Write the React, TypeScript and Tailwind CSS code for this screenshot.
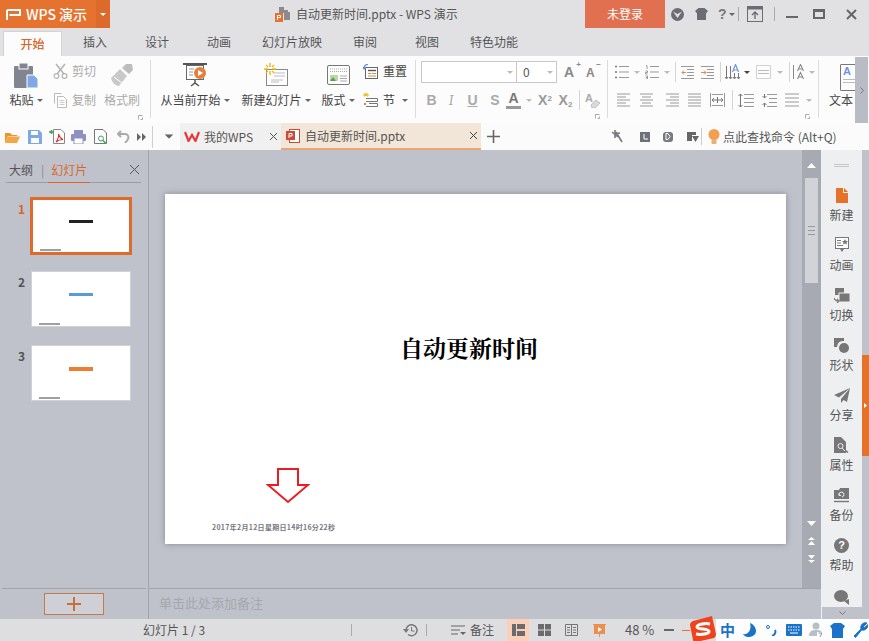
import React from 'react';

const FONT = { fontFamily: '"Noto Sans CJK SC", "Liberation Sans", sans-serif' };

type IconProps = { w: number; h: number; className?: string; children: React.ReactNode };

const Ico: React.FC<IconProps> = ({ w, h, className, children }) => (
  <svg width={w} height={h} viewBox={`0 0 ${w} ${h}`} fill="none" className={`shrink-0 ${className ?? ''}`}>
    {children}
  </svg>
);

const Caret: React.FC<{ className?: string; color?: string }> = ({ className, color = '#666' }) => (
  <Ico w={6} h={3} className={className}>
    <polygon points="0,0 6,0 3,3" fill={color} />
  </Ico>
);

// horizontal text lines used by the paragraph buttons
const Lines: React.FC<{ w: number; rows: [number, number][]; className?: string; color?: string }> = ({
  w,
  rows,
  className,
  color = '#9a9a9a',
}) => (
  <Ico w={w} h={14} className={className}>
    {rows.map(([x, len], i) => (
      <rect key={i} x={x} y={1 + i * (12 / (rows.length - 1 || 1)) - 0.5} width={len} height={1} fill={color} />
    ))}
  </Ico>
);

const Launcher: React.FC<{ className?: string }> = ({ className }) => (
  <Ico w={5} h={5} className={className}>
    <path d="M0.5 4.5V0.5H4.5M4.5 2.5V4.5H2.5" stroke="#aaa" />
  </Ico>
);

const RibbonSep = () => <div className="w-px h-[58px] mt-[4px] bg-[#dcdcdc] shrink-0" />;
const RowSep: React.FC<{ className?: string }> = ({ className }) => (
  <div className={`w-px h-[20px] bg-[#d4d4d4] shrink-0 ${className ?? ''}`} />
);

const LargeBtn: React.FC<{ className: string; label: string; children: React.ReactNode; muted?: boolean; caret?: boolean }> = ({
  className,
  label,
  children,
  muted,
  caret = true,
}) => (
  <div className={`flex flex-col items-center shrink-0 pt-[7px] ${className}`}>
    <div className="h-[28px] flex items-start">{children}</div>
    <div className={`h-[18px] flex items-center gap-[3px] text-[12px] whitespace-nowrap ${muted ? 'text-[#aaa]' : 'text-[#444]'}`}>
      {label}
      {caret && <Caret />}
    </div>
  </div>
);

const PasteIcon = () => (
  <Ico w={26} h={26}>
    <rect x="1" y="3" width="19" height="22" rx="1" fill="#80858f" />
    <rect x="6" y="0" width="9" height="6" fill="#80858f" stroke="#fff" strokeWidth="1" />
    <polygon points="14,12 21,12 25,16 25,25 14,25" fill="#7fa8e6" stroke="#fff" strokeWidth="1" />
  </Ico>
);

const ScissorIcon = () => (
  <Ico w={15} h={16}>
    <path d="M3 1L11 11M12 1L4 11" stroke="#b5b5b5" strokeWidth="1.6" />
    <circle cx="3.5" cy="13" r="2.4" stroke="#b5b5b5" strokeWidth="1.2" />
    <circle cx="11.5" cy="13" r="2.4" stroke="#b5b5b5" strokeWidth="1.2" />
  </Ico>
);

const CopyIcon = () => (
  <Ico w={15} h={16}>
    <path d="M1.5 11.5V1.5H8.5" stroke="#bbb" />
    <path d="M4.5 4.5H10.5L13.5 7.5V15.5H4.5Z" stroke="#bbb" fill="#fff" />
    <path d="M6.5 8.5H11.5M6.5 10.5H11.5M6.5 12.5H11.5" stroke="#ccc" />
  </Ico>
);

const BrushIcon = () => (
  <Ico w={24} h={24}>
    <path d="M1 15L10 6L17 13L9 23C6 23 2 20 1 15Z" fill="#c9c9c9" />
    <path d="M12 5L16 1L22 1L23 7L19 11Z" fill="#bdbdbd" />
    <path d="M4 14L12 20" stroke="#fff" />
  </Ico>
);

const PresentIcon = () => (
  <Ico w={24} h={24}>
    <path d="M0 1H24" stroke="#555" strokeWidth="2" />
    <rect x="3.5" y="2.5" width="17" height="14" stroke="#666" fill="#fff" />
    <path d="M6 6H11M6 9H10M6 12H10" stroke="#999" />
    <circle cx="17" cy="10" r="6" fill="#e57f3d" />
    <polygon points="15,7 20,10 15,13" fill="#fff" />
    <path d="M12 17V20M8 23L12 20L16 23" stroke="#555" strokeWidth="1.5" />
  </Ico>
);

const NewSlideIcon = () => (
  <Ico w={24} h={23}>
    <rect x="2.5" y="6.5" width="21" height="16" stroke="#888" fill="#fff" />
    <path d="M10 10H21M10 13H21M7 17H19M7 19H15" stroke="#bbb" />
    <path d="M6 0V4M6 8V12M0 6H4M8 6H12M2 2L4 4M8 8L10 10M10 2L8 4M4 8L2 10" stroke="#efb70f" strokeWidth="1.4" />
  </Ico>
);

const LayoutIcon = () => (
  <Ico w={23} h={20}>
    <rect x="0.5" y="0.5" width="22" height="19" rx="1.5" stroke="#777" fill="#fff" />
    <path d="M3 4H20M3 6.5H20" stroke="#aaa" strokeDasharray="1 1" />
    <rect x="3" y="10" width="8" height="6" fill="#b9d8a8" />
    <polygon points="3,16 6,12 9,16" fill="#5da04f" />
    <path d="M13 11H20M13 13.5H20M13 16H20" stroke="#aaa" />
  </Ico>
);

const ResetIcon = () => (
  <Ico w={15} h={15}>
    <rect x="2.5" y="3.5" width="12" height="11" stroke="#666" fill="#fff" />
    <path d="M5 6.5H13" stroke="#555" strokeWidth="1.4" />
    <path d="M5 9.5H8M9 9.5H13M5 12H13" stroke="#d98a50" />
    <path d="M5 0.5C2.5 0.5 1 2 1 4.5M0 3L1 5L3 3.5" stroke="#5d8fd8" strokeWidth="1.2" />
  </Ico>
);

const SectionIcon = () => (
  <Ico w={15} h={15}>
    <path d="M3 0V3M0 2H6M1 0.5L5 3.5M5 0.5L1 3.5" stroke="#efb70f" />
    <path d="M3 5.5H14.5V8.5H3M6 10.5H14.5V13.5H3" stroke="#777" />
    <rect x="1" y="10" width="2" height="2" fill="#e57f3d" />
  </Ico>
);

const Ribbon = () => (
  <div className="flex h-[67px] bg-[#fcfcfc] shrink-0">
    {/* clipboard */}
    <div className="w-[150px] shrink-0 flex flex-col">
      <div className="flex h-[55px]">
        <LargeBtn className="w-[52px]" label="粘贴">
          <PasteIcon />
        </LargeBtn>
        <div className="w-[50px] shrink-0 pl-px">
          <div className="flex items-center gap-[4px] h-[22px] mt-[4px] text-[12px] text-[#aaa]">
            <ScissorIcon />
            剪切
          </div>
          <div className="flex items-center gap-[4px] h-[22px] mt-[7px] text-[12px] text-[#aaa]">
            <CopyIcon />
            复制
          </div>
        </div>
        <LargeBtn className="w-[38px] ml-px" label="格式刷" muted caret={false}>
          <BrushIcon />
        </LargeBtn>
      </div>
      <div className="flex justify-end pr-[7px] mt-[4px]">
        <Launcher />
      </div>
    </div>
    <RibbonSep />
    {/* slides */}
    <div className="w-[264px] shrink-0 flex">
      <LargeBtn className="w-[72px] ml-[8px]" label="从当前开始">
        <PresentIcon />
      </LargeBtn>
      <LargeBtn className="w-[72px] ml-[9px]" label="新建幻灯片">
        <NewSlideIcon />
      </LargeBtn>
      <LargeBtn className="w-[36px] ml-[8px]" label="版式">
        <div className="mt-[2px]">
          <LayoutIcon />
        </div>
      </LargeBtn>
      <div className="ml-[7px] w-[50px] shrink-0">
        <div className="flex items-center gap-[5px] h-[22px] mt-[4px] text-[12px] text-[#444]">
          <ResetIcon />
          重置
        </div>
        <div className="flex items-center gap-[5px] h-[22px] mt-[7px] text-[12px] text-[#444]">
          <SectionIcon />
          节
          <Caret className="ml-[2px]" />
        </div>
      </div>
    </div>
    <RibbonSep />
    {/* font */}
    <div className="w-[191px] shrink-0 flex flex-col">
      <div className="flex items-center h-[22px] mt-[5px]">
        <div className="w-[96px] h-[22px] ml-[5px] border border-[#c8c8c8] bg-white flex items-center justify-end pr-[3px] shrink-0">
          <Caret color="#bbb" />
        </div>
        <div className="w-[41px] h-[22px] -ml-px border border-[#c8c8c8] bg-white flex items-center justify-between pl-[6px] pr-[3px] text-[12px] text-[#555] shrink-0">
          0
          <Caret color="#bbb" />
        </div>
        <div className="ml-[7px] w-[15px] h-[18px] relative text-[14px] leading-[18px] text-[#888] font-bold" style={{ fontFamily: '"Liberation Sans"' }}>
          A<span className="absolute right-[-2px] top-[-3px] text-[8px] leading-[10px]">+</span>
        </div>
        <div className="ml-[7px] w-[15px] h-[18px] relative text-[12px] leading-[20px] text-[#888] font-bold" style={{ fontFamily: '"Liberation Sans"' }}>
          A<span className="absolute right-[0px] top-[-3px] text-[8px] leading-[10px]">−</span>
        </div>
      </div>
      <div className="flex items-center h-[22px] mt-[6px] text-[#aaa] font-bold" style={{ fontFamily: '"Liberation Sans"' }}>
        <span className="w-[11px] ml-[10px] text-[14px] text-center">B</span>
        <span className="w-[8px] ml-[10px] text-[14px] text-center italic font-normal font-serif">I</span>
        <span className="w-[11px] ml-[12px] text-[14px] text-center underline">U</span>
        <span className="w-[10px] ml-[12px] text-[14px] text-center">S</span>
        <span className="w-[15px] ml-[6px] text-[14px] leading-[15px] text-center text-[#777] border-b-[3px] border-[#999]">A</span>
        <Caret className="ml-[5px]" color="#bbb" />
        <span className="w-[16px] ml-[5px] text-[14px] text-center text-[#999]">
          X<sup className="text-[8px]">2</sup>
        </span>
        <span className="w-[15px] ml-[5px] text-[14px] text-center text-[#999]">
          X<sub className="text-[8px]">2</sub>
        </span>
        <RowSep className="ml-[6px]" />
        <Ico w={15} h={16} className="ml-[5px]">
          <text x="0" y="10" fontSize="11" fill="#aaa" fontFamily="Liberation Sans">
            A
          </text>
          <path d="M6 13L11 8L15 11L10 16H7Z" fill="#d9d9d9" stroke="#aaa" strokeWidth="0.6" />
        </Ico>
      </div>
      <div className="flex justify-end pr-[7px] mt-[3px]">
        <Launcher />
      </div>
    </div>
    <RibbonSep />
    {/* paragraph */}
    <div className="w-[210px] shrink-0 flex flex-col">
      <div className="flex items-center h-[22px] mt-[5px]">
        <Ico w={14} h={14} className="ml-[7px]">
          <path d="M4 1.500H14M4 7H14M4 12.500H14" stroke="#999" />
          <circle cx="1" cy="1.500" r="1" fill="#777" />
          <circle cx="1" cy="7" r="1" fill="#777" />
          <circle cx="1" cy="12.500" r="1" fill="#777" />
        </Ico>
        <Caret className="ml-[5px]" color="#bbb" />
        <Ico w={14} h={14} className="ml-[5px]">
          <path d="M5 1.500H14M5 7H14M5 12.500H14" stroke="#999" />
          <path d="M1 1L2 0.500V4M0.500 6H2.500V7.500H0.500V9H2.500M0.500 11H2.500V14H0.500M1 12.500H2.500" stroke="#777" strokeWidth="0.7" />
        </Ico>
        <Caret className="ml-[5px]" color="#bbb" />
        <RowSep className="ml-[5px]" />
        <Ico w={13} h={14} className="ml-[5px]">
          <path d="M0 1.500H13M6 4.500H13M6 7.500H13M6 10.500H13M0 13.500H13" stroke="#999" />
          <path d="M5 7.500H1M3 5.500L1 7.500L3 9.500" stroke="#d98a50" />
        </Ico>
        <Ico w={13} h={14} className="ml-[7px]">
          <path d="M0 1.500H13M6 4.500H13M6 7.500H13M6 10.500H13M0 13.500H13" stroke="#999" />
          <path d="M0 7.500H5M3 5.500L5 7.500L3 9.500" stroke="#d98a50" />
        </Ico>
        <RowSep className="ml-[6px]" />
        <Ico w={16} h={16} className="ml-[4px]">
          <path d="M1.500 2V14M5.500 2V14M9.500 9V14M13.500 9V14" stroke="#777" />
          <path d="M0 13L1.500 15L3 13M4 13L5.500 15L7 13M8 13L9.500 15L11 13M12 13L13.500 15L15 13" stroke="#777" />
          <path d="M7.500 8L10.500 0.500L13.500 8M8.500 6H12.500" stroke="#6c95dd" strokeWidth="1.200" />
        </Ico>
        <Caret className="ml-[3px]" color="#444" />
        <Ico w={15} h={14} className="ml-[6px]">
          <rect x="0.500" y="0.500" width="14" height="13" stroke="#aaa" strokeDasharray="1 1" />
          <path d="M2 5.500H13M2 8.500H13" stroke="#bbb" />
        </Ico>
        <Caret className="ml-[6px]" color="#bbb" />
        <RowSep className="ml-[6px]" />
        <Ico w={14} h={16} className="ml-[3px]">
          <path d="M0.500 1V15" stroke="#888" />
          <path d="M4.500 7L7.500 0.500L10.500 7M5.500 5H9.500M4.500 15L7.500 8.500L10.500 15M5.500 13H9.500" stroke="#888" strokeWidth="1.100" />
        </Ico>
        <Caret className="ml-[2px]" color="#bbb" />
      </div>
      <div className="flex items-center h-[22px] mt-[6px]">
        <Lines w={13} rows={[[0, 13], [0, 9], [0, 13], [0, 9], [0, 13]]} className="ml-[9px]" />
        <Lines w={13} rows={[[0, 13], [2, 9], [0, 13], [2, 9], [0, 13]]} className="ml-[10px]" />
        <Lines w={13} rows={[[0, 13], [4, 9], [0, 13], [4, 9], [0, 13]]} className="ml-[13px]" />
        <Lines w={13} rows={[[0, 13], [0, 13], [0, 13], [0, 13], [0, 13]]} className="ml-[9px]" />
        <Ico w={15} h={14} className="ml-[9px]">
          <path d="M0.500 0V14M14.500 0V14M2 1.500H13M2 12.500H13" stroke="#999" />
          <path d="M2 7H13M4 5L2 7L4 9M11 5L13 7L11 9M7.500 4V10" stroke="#777" />
        </Ico>
        <RowSep className="ml-[7px]" />
        <Ico w={16} h={15} className="ml-[5px]">
          <path d="M6 1.500H16M6 5.500H16M6 9.500H16M6 13.500H16" stroke="#999" />
          <path d="M2.500 1V14M0.500 3L2.500 1L4.500 3M0.500 12L2.500 14L4.500 12" stroke="#777" />
        </Ico>
        <Ico w={15} h={15} className="ml-[8px]">
          <path d="M5 1.500H15M7 5.500H15M7 9.500H15M5 13.500H15" stroke="#999" />
          <path d="M2.500 1V5M0.500 3L2.500 5L4.500 3M2.500 14V10M0.500 12L2.500 10L4.500 12" stroke="#777" />
        </Ico>
        <Lines w={14} rows={[[0, 14], [0, 14], [0, 14], [0, 14]]} className="ml-[8px]" />
        <Caret className="ml-[7px]" color="#bbb" />
      </div>
      <div className="flex justify-end pr-[8px] mt-[3px]">
        <Launcher />
      </div>
    </div>
    <RibbonSep />
    {/* text box, cut by the scroll button */}
    <div className="w-[36px] shrink-0 overflow-hidden pl-[10px] pt-[8px]">
      <div className="h-[27px] ml-[11px] w-[20px] border border-[#777] rounded-[1px] flex flex-col items-start pl-[2px]">
        <span className="text-[11px] leading-[12px] font-bold text-[#6c95dd]" style={{ fontFamily: '"Liberation Sans"' }}>
          A
        </span>
        <div className="w-[14px] h-px bg-[#bbb] mt-[2px]" />
        <div className="w-[14px] h-px bg-[#bbb] mt-[2px]" />
      </div>
      <div className="h-[18px] flex items-center text-[12px] text-[#444] whitespace-nowrap">文本</div>
    </div>
    <div className="w-[13px] shrink-0 h-[66px] mt-px bg-[#b9bcc5] flex items-center justify-center">
      <Ico w={4} h={7}>
        <path d="M0.500 0.500L3.500 3.500L0.500 6.500" stroke="#777" />
      </Ico>
    </div>
  </div>
);

const TitleBar = () => (
  <div className="flex h-[28px] bg-[#e1e1e4] shrink-0">
    <div className="w-[96px] bg-[#e5722f] flex items-center pl-[6px] text-white text-[14px] font-medium shrink-0 whitespace-nowrap">
      <Ico w={15} h={11} className="mr-[5px]">
        <path d="M1 1H14V6H3.500M1 1V11" stroke="#fff" strokeWidth="2" />
      </Ico>
      WPS 演示
    </div>
    <div className="w-[14px] bg-[#dc6a2b] flex items-center justify-center shrink-0">
      <Caret color="#fff" />
    </div>
    <div className="flex items-center ml-[165px] w-[310px] text-[12px] text-[#555]">
      <Ico w={15} h={15} className="mr-[6px]">
        <path d="M4 0H9V3H13V5L15 5V13H9V6H4Z" fill="#8b8b8b" />
        <rect x="0" y="6" width="8" height="9" fill="#e5722f" />
        <path d="M2.500 13V8.500H5.500V10.500H2.500" stroke="#fff" />
      </Ico>
      自动更新时间.pptx - WPS 演示
    </div>
    <div className="w-[80px] bg-[#e07050] text-white text-[12px] flex items-center justify-center shrink-0">未登录</div>
    <Ico w={13} h={13} className="ml-[6px] mt-[8px]">
      <circle cx="6.500" cy="6.500" r="6.500" fill="#6b6d72" />
      <path d="M2 3.500L6.500 10L11 3.500L6.500 6Z" fill="#e1e1e4" />
    </Ico>
    <Ico w={13} h={12} className="ml-[11px] mt-[8px]">
      <path d="M3.500 0H9.500L13 3L11 5.500V12H2V5.500L0 3Z" fill="#6b6d72" />
    </Ico>
    <span className="ml-[10px] text-[14px] leading-[28px] font-bold text-[#777]" style={{ fontFamily: '"Liberation Sans"' }}>
      ?
    </span>
    <Caret className="ml-[2px] mt-[13px]" />
    <div className="w-px h-[14px] bg-[#aaa] ml-[3px] mt-[7px]" />
    <Ico w={16} h={16} className="ml-[8px] mt-[6px]">
      <rect x="0.500" y="0.500" width="15" height="15" stroke="#6b6d72" />
      <path d="M0 2H16" stroke="#6b6d72" strokeWidth="3" />
      <path d="M8 13V6M5 9L8 6L11 9" stroke="#6b6d72" strokeWidth="1.400" />
    </Ico>
    <div className="w-px h-[14px] bg-[#aaa] ml-[11px] mt-[7px]" />
    <div className="w-[12px] h-[2px] bg-[#666] ml-[11px] mt-[16px]" />
    <div className="w-[12px] h-[10px] border-2 border-t-[3px] border-[#666] ml-[15px] mt-[9px]" />
    <Ico w={11} h={11} className="ml-[21px] mt-[9px]">
      <path d="M1 1L10 10M10 1L1 10" stroke="#666" strokeWidth="2" />
    </Ico>
  </div>
);

const MenuTabs = () => (
  <div className="flex h-[28px] bg-[#e1e1e4] shrink-0 text-[12px] text-[#555]">
    <div className="ml-[3px] mt-[3px] w-[59px] h-[25px] bg-[#fcfcfc] border border-b-0 border-[#d4d4d4] flex items-center justify-center text-[#d9652a] font-medium">
      开始
    </div>
    <div className="flex ml-[2px]">
      {['插入', '设计', '动画', '幻灯片放映', '审阅', '视图', '特色功能'].map((t) => (
        <div key={t} className="min-w-[62px] px-[12px] flex items-center justify-center">
          {t}
        </div>
      ))}
    </div>
  </div>
);

const QuickBar = () => (
  <div className="flex h-[27px] bg-[#fbfbfb] shrink-0 items-center text-[12px] text-[#555]">
    <Ico w={15} h={12} className="ml-[5px]">
      <path d="M0 2H5L7 4H12V5H3L0 12Z" fill="#e8962f" />
      <path d="M3 5.500H15L12 12H0Z" fill="#f6a545" />
    </Ico>
    <Ico w={14} h={14} className="ml-[8px]">
      <path d="M0 0H11L14 3V14H0Z" fill="#7fa8e6" />
      <rect x="3" y="1" width="7" height="4" fill="#fff" />
      <rect x="3" y="8" width="8" height="5" fill="#fff" />
    </Ico>
    <Ico w={16} h={15} className="ml-[7px]">
      <path d="M4.500 0.500H12L15.500 4V14.500H4.500Z" stroke="#888" fill="#fff" />
      <path d="M0 3H5M2.500 1V5" stroke="#3da35d" strokeWidth="1.600" />
      <path d="M7 13C9 10 10 7 9.500 5C11 9 12 10 14 10.500C11 10.500 9 11 7 13Z" stroke="#d92d2d" strokeWidth="1.100" />
    </Ico>
    <Ico w={15} h={14} className="ml-[6px]">
      <rect x="3" y="0" width="9" height="4" fill="#8e90c4" />
      <rect x="0" y="4" width="15" height="7" rx="1" fill="#8e90c4" />
      <rect x="3" y="8" width="9" height="6" fill="#fff" stroke="#8e90c4" />
    </Ico>
    <Ico w={14} h={15} className="ml-[8px]">
      <path d="M0.500 0.500H9L12.500 4V14.500H0.500Z" stroke="#777" fill="#fff" />
      <circle cx="7" cy="9.500" r="2.500" stroke="#3da35d" />
      <path d="M9 11.500L12 14.500" stroke="#3da35d" strokeWidth="1.500" />
    </Ico>
    <Ico w={13} h={13} className="ml-[9px]">
      <path d="M4 1L1 4L4 7M1 4H8C11 4 12 7 11 9C10.500 10.500 9 12 8 13" stroke="#aaa" strokeWidth="2" />
    </Ico>
    <Ico w={9} h={8} className="ml-[7px]">
      <polygon points="0,0 4,4 0,8" fill="#666" />
      <polygon points="5,0 9,4 5,8" fill="#666" />
    </Ico>
    <div className="w-px h-[22px] bg-[#d0d0d0] ml-[6px]" />
    <Caret className="ml-[13px] scale-x-150 scale-y-150" color="#666" />
    <div className="ml-[8px] w-[101px] h-full bg-[#f0f0f0] flex items-center pl-[4px] shrink-0">
      <Ico w={16} h={11} className="mr-[4px]">
        <path d="M1 1L4.500 10L8 4L11.500 10L15 1" stroke="#e4393c" strokeWidth="2.200" />
      </Ico>
      我的WPS
      <Ico w={7} h={7} className="ml-[17px]">
        <path d="M0 0L7 7M7 0L0 7" stroke="#555" />
      </Ico>
    </div>
    <div className="w-[200px] h-full bg-[#f2e6d8] border-b-2 border-[#e9a678] flex items-center pl-[5px] shrink-0">
      <Ico w={14} h={14} className="mr-[5px]">
        <rect x="3.500" y="0.500" width="10" height="13" stroke="#cc4b37" fill="#fff" />
        <rect x="0" y="2" width="9" height="9" fill="#cc4b37" />
        <path d="M3 9V4.500H6V7H3" stroke="#fff" />
      </Ico>
      自动更新时间.pptx
      <Ico w={7} h={7} className="ml-[65px]">
        <path d="M0 0L7 7M7 0L0 7" stroke="#444" />
      </Ico>
    </div>
    <Ico w={13} h={13} className="ml-[6px]">
      <path d="M6.500 0V13M0 6.500H13" stroke="#666" strokeWidth="1.600" />
    </Ico>
    <Ico w={12} h={13} className="ml-[111px]">
      <path d="M5 2L11 12M3 4L9 3M4 0V8M1 2L7 7" stroke="#77797f" strokeWidth="1.600" />
    </Ico>
    <div className="ml-[17px] w-[10px] h-[10px] bg-[#6f7179] flex items-center justify-center shrink-0">
      <Ico w={5} h={6}>
        <path d="M1 0V5H5" stroke="#fff" />
      </Ico>
    </div>
    <div className="ml-[13px] w-[10px] h-[10px] rounded-[3px] bg-[#77797f] flex items-center justify-center shrink-0">
      <Ico w={6} h={7}>
        <path d="M1 0.500H3L5 3.500L3 6.500H1Z" stroke="#fff" />
      </Ico>
    </div>
    <Ico w={12} h={10} className="ml-[14px]">
      <path d="M0 0H9V3H5V9H0Z" fill="#666" />
      <polygon points="5,4 12,4 8.500,10" fill="#666" />
    </Ico>
    <div className="w-px h-[17px] bg-[#ccc] ml-[2px]" />
    <Ico w={12} h={15} className="ml-[6px]">
      <circle cx="6" cy="5.500" r="5.500" fill="#f0a050" />
      <rect x="3.500" y="10" width="5" height="5" rx="1" fill="#e8b078" />
    </Ico>
    <span className="ml-[3px] whitespace-nowrap">点此查找命令 (Alt+Q)</span>
  </div>
);

const Thumb: React.FC<{ n: number; active?: boolean; bar: string; barH: string; titleTop: string }> = ({ n, active, bar, barH, titleTop }) => (
  <div className="flex h-[58px] items-start">
    <div className={`w-[30px] pl-[18px] text-[12px] leading-[16px] font-bold ${active ? 'text-[#d9652a] mt-[4px]' : 'text-[#555] mt-[3px]'}`}>{n}</div>
    <div
      className={
        active
          ? 'w-[102px] h-[58px] border-[3px] border-[#de6b2b] bg-white flex flex-col'
          : 'w-[100px] h-[56px] ml-px bg-white border border-[#d0d1d6] flex flex-col'
      }
    >
      <div className={`${titleTop} ${barH} ${bar} w-[24px] mx-auto`} />
      <div className="mt-auto mb-px ml-[7px] w-[21px] h-[2px] bg-[#a0a0a0]" />
    </div>
  </div>
);

const SideItem: React.FC<{ label: string; children: React.ReactNode }> = ({ label, children }) => (
  <div className="h-[50px] flex flex-col items-center shrink-0">
    <div className="h-[19px] flex items-end">{children}</div>
    <div className="text-[12px] leading-[18px] mt-[3px] text-[#555]">{label}</div>
  </div>
);

const Sidebar = () => (
  <div className="w-[41px] shrink-0 bg-[#eeeff1] flex flex-col relative overflow-hidden">
    <div className="mt-[14px] mx-auto w-[15px] h-[3px] border-y border-[#c8c8cc] shrink-0" />
    <div className="mt-[17px]">
      <SideItem label="新建">
        <Ico w={12} h={15}>
          <path d="M0 0H7V5H12V15H0Z" fill="#e8712a" />
          <path d="M8 0L12 4H8Z" fill="#e8712a" />
        </Ico>
      </SideItem>
      <SideItem label="动画">
        <Ico w={14} h={16}>
          <rect x="0.500" y="0.500" width="13" height="11" stroke="#777" fill="#fff" />
          <path d="M2 3.500H6M2 6H6M2 8.500H8" stroke="#777" />
          <polygon points="10,2 11,4 13,4 11.500,5.500 12,7.500 10,6.500 8,7.500 8.500,5.500 7,4 9,4" fill="#777" />
          <polygon points="5,12 9,12 7,15" fill="#777" />
        </Ico>
      </SideItem>
      <SideItem label="切换">
        <Ico w={16} h={15}>
          <rect x="1" y="0" width="9" height="7" fill="#777" />
          <rect x="5" y="5" width="11" height="9" fill="#777" stroke="#eeeff1" />
          <path d="M0 10C1 13 3 13 5 13M3 11L5 13L3 15" stroke="#777" strokeWidth="1.200" />
        </Ico>
      </SideItem>
      <SideItem label="形状">
        <Ico w={15} h={15}>
          <path d="M0 0H10V3A6 6 0 0 0 3 9H0Z" fill="#777" />
          <circle cx="10" cy="10" r="5" fill="#777" />
        </Ico>
      </SideItem>
      <SideItem label="分享">
        <Ico w={16} h={15}>
          <path d="M16 0L0 7L5 9.500L16 0L7 11V15L9.500 12L13 14Z" fill="#777" />
        </Ico>
      </SideItem>
      <SideItem label="属性">
        <Ico w={15} h={16}>
          <path d="M0 0H7L12 5V16H0Z" fill="#777" />
          <circle cx="6.500" cy="9" r="2.500" stroke="#eeeff1" />
          <path d="M8.500 11L14 15.500" stroke="#777" strokeWidth="1.600" />
          <path d="M8 11L11 14" stroke="#eeeff1" />
        </Ico>
      </SideItem>
      <SideItem label="备份">
        <Ico w={15} h={15}>
          <path d="M0 2H5L6 0H15V11H0Z" fill="#777" />
          <path d="M0 13.500H15" stroke="#777" strokeWidth="1.400" />
          <path d="M5 7A2.500 2.500 0 1 1 8 9M5 5.500V7.500H7" stroke="#eeeff1" />
        </Ico>
      </SideItem>
      <SideItem label="帮助">
        <div className="w-[15px] h-[15px] rounded-full bg-[#777] text-white text-[11px] leading-[15px] font-bold text-center" style={{ fontFamily: '"Liberation Sans"' }}>
          ?
        </div>
      </SideItem>
      <Ico w={16} h={15} className="mx-auto mt-[6px]">
        <ellipse cx="7" cy="6" rx="7" ry="6" fill="#777" />
        <path d="M10 11L15 9L15 15Z" fill="#777" />
      </Ico>
    </div>
    <div className="absolute bottom-0 left-px right-0 h-[12px] bg-[#bfc2cb] flex items-center justify-center">
      <Ico w={7} h={4}>
        <path d="M0.500 0.500L3.500 3.500L6.500 0.500" stroke="#777" />
      </Ico>
    </div>
  </div>
);

const VScroll = () => (
  <div className="w-[19px] shrink-0 bg-[#a8aab3] flex flex-col items-center">
    <Ico w={9} h={5} className="mt-[13px]">
      <polygon points="4.500,0 9,5 0,5" fill="#fff" />
    </Ico>
    <div className="mt-[10px] w-[13px] h-[105px] bg-[#d2d3d8] flex flex-col items-center justify-center gap-[3px]">
      <div className="w-[7px] h-px bg-[#999]" />
      <div className="w-[7px] h-px bg-[#999]" />
      <div className="w-[7px] h-px bg-[#999]" />
    </div>
    <Ico w={9} h={5} className="mt-auto">
      <polygon points="0,0 9,0 4.500,5" fill="#fff" />
    </Ico>
    <Ico w={7} h={8} className="mt-[11px]">
      <polygon points="3.500,0 7,3 0,3" fill="#fff" />
      <polygon points="3.500,4 7,8 0,8" fill="#fff" />
    </Ico>
    <Ico w={7} h={8} className="mt-[10px] mb-[25px]">
      <polygon points="0,0 7,0 3.500,4" fill="#fff" />
      <polygon points="0,5 7,5 3.500,8" fill="#fff" />
    </Ico>
  </div>
);

const SlideCanvas = () => (
  <div className="relative w-[621px] h-[350px] bg-white shadow-[0_0_6px_rgba(90,90,100,0.55)] shrink-0">
    <div className="absolute left-[235px] top-[139px] text-[23px] leading-[30px] font-bold text-black whitespace-nowrap" style={{ fontFamily: '"Noto Serif CJK SC", "Noto Sans CJK SC", serif' }}>
      自动更新时间
    </div>
    <svg width="44" height="37" viewBox="0 0 44 37" fill="none" className="absolute left-[101px] top-[273px]">
      <path d="M12 2H32V18H42L22 35L2 18H12Z" stroke="#ed1c24" strokeWidth="2" fill="#fff" />
    </svg>
    <div className="absolute left-[47px] top-[328px] text-[7px] leading-[10px] font-bold text-[#77777f] whitespace-nowrap tracking-[0.3px]">
      2017年2月12日星期日14时16分22秒
    </div>
  </div>
);

const StatusBar = () => (
  <div className="relative h-[22px] bg-[#dedee1] flex items-center text-[12px] text-[#555] shrink-0">
    <span className="ml-[143px] w-[67px] whitespace-nowrap">幻灯片 1 / 3</span>
    <div className="w-px h-[12px] bg-[#aaa] ml-[141px]" />
    <Ico w={15} h={14} className="ml-[51px]">
      <path d="M3 7A5.500 5.500 0 1 1 5 11.500" stroke="#777" strokeWidth="1.500" />
      <polygon points="0,6 6,6 3,10" fill="#777" />
      <path d="M8.500 4V8H11.500" stroke="#777" />
    </Ico>
    <div className="w-px h-[12px] bg-[#aaa] ml-[8px]" />
    <Ico w={15} h={11} className="ml-[24px]">
      <path d="M0 1H14M0 5H9M0 9H7" stroke="#666" />
      <polygon points="9,7 15,7 12,10" fill="#666" />
    </Ico>
    <span className="ml-[4px]">备注</span>
    <div className="ml-[13px] w-[22px] h-[22px] bg-[#fbd0bb] flex items-center justify-center shrink-0">
      <Ico w={13} h={12}>
        <path d="M0 0H4V12H0ZM5 0H13V5H5ZM5 7H13V12H5Z" fill="#6b6b6b" />
      </Ico>
    </div>
    <Ico w={13} h={12} className="ml-[9px]">
      <path d="M0 0H6V5.500H0ZM7 0H13V5.500H7ZM0 6.500H6V12H0ZM7 6.500H13V12H7Z" fill="#6b6b6b" />
    </Ico>
    <Ico w={13} h={12} className="ml-[14px]">
      <path d="M0.500 0.500H12.500V11.500H0.500ZM6.500 0.500V11.500M2 3.500H5M2 6H5M2 8.500H5M8 3.500H11M8 6H11M8 8.500H11" stroke="#777" />
    </Ico>
    <Ico w={13} h={13} className="ml-[15px]">
      <path d="M0 0H13V1H12V10H1V1H0Z" fill="#ec8f4e" />
      <polygon points="5,3 9,5.500 5,8" fill="#fff" />
      <path d="M6.500 10V13" stroke="#ec8f4e" />
    </Ico>
    <span className="ml-[19px] whitespace-nowrap text-[13px]">48 %</span>
    <div className="w-[10px] h-[2px] bg-[#666] ml-[10px]" />
    <div className="w-[8px] h-[1px] bg-[#e8712a] ml-[8px]" />

    {/* input method bar sits on top of the status bar */}
    <div className="absolute right-0 bottom-0 w-[153px] h-[22px] bg-[#fdfdfd] flex items-center">
      <span className="ml-[4px] text-[15px] leading-[18px] font-bold text-[#1a73c8]">中</span>
      <Ico w={13} h={14} className="ml-[8px]">
        <path d="M7 0C10 1 13 4 13 8C13 12 9 14 5 14C3 14 1 13 0 11C5 12 9 7 7 0Z" fill="#1a73c8" />
      </Ico>
      <Ico w={11} h={11} className="ml-[10px]">
        <circle cx="2" cy="2" r="1.500" stroke="#1a73c8" />
        <path d="M9 5C10 7 9 10 6 11" stroke="#1a73c8" strokeWidth="2" />
      </Ico>
      <Ico w={16} h={12} className="ml-[9px]">
        <rect x="0" y="0" width="16" height="12" rx="1" fill="#1a73c8" />
        <path d="M2 3H14M2 6H14" stroke="#fff" strokeDasharray="1.500 1" />
        <path d="M4 9H12" stroke="#fff" />
      </Ico>
      <Ico w={15} h={16} className="ml-[7px]">
        <circle cx="7" cy="4" r="3.500" fill="#b8bfc8" />
        <path d="M0 14C0 9 3 8 7 8C11 8 14 9 14 14Z" fill="#b8bfc8" />
        <rect x="8" y="10" width="7" height="6" fill="#fff" />
        <path d="M9.500 11H13L11 15" stroke="#8a929c" />
      </Ico>
      <Ico w={15} h={15} className="ml-[6px]">
        <path d="M4 0H11L15 3L13 6V15H2V6L0 3Z" fill="#1a73c8" />
      </Ico>
      <Ico w={16} h={16} className="ml-[7px]">
        <path d="M2 14L9 7C8 3 11 0 15 1L11.500 4.500L12.500 5.500L16 2.500C16 6 13 9 9.500 8L3.500 15.500Z" fill="#1a73c8" stroke="#1a73c8" />
      </Ico>
    </div>
    {/* sogou logo */}
    <svg width="27" height="26" viewBox="0 0 27 26" fill="none" className="absolute left-[690px] bottom-[-1px]">
      <path d="M3 5L22 0L26 18C26 20 25 21 24 22L6 26C4 26 3 25 3 24L0 9C0 7 1 6 3 5Z" fill="#f0431d" />
      <path d="M20 8C16 7 7 8 7 11C7 14 19 12 19 15.500C19 18 11 19 6 18" stroke="#fff" strokeWidth="3" />
    </svg>
  </div>
);

export default function App() {
  return (
    <div className="w-[869px] h-[641px] flex flex-col overflow-hidden bg-[#bfc2cb]" style={FONT}>
      <TitleBar />
      <MenuTabs />
      <Ribbon />
      <QuickBar />

      <div className="flex h-[469px] shrink-0">
        {/* slide list */}
        <div className="w-[149px] shrink-0 border-r border-[#a0a3ab] flex flex-col">
          <div className="ml-[6px] w-[135px] h-[33px] pt-[7px] flex items-stretch border-b border-[#9a9ca4] text-[12px] text-[#555] whitespace-nowrap shrink-0">
            <span className="ml-[3px] flex items-center">大纲</span>
            <span className="ml-[8px] flex items-center text-[#888]">|</span>
            <span className="ml-[4px] w-[42px] -mb-px flex items-center justify-center text-[#d9652a] border-b border-[#d9652a]">幻灯片</span>
            <div className="ml-[40px] flex items-center">
              <Ico w={9} h={9}>
                <path d="M0 0L9 9M9 0L0 9" stroke="#555" />
              </Ico>
            </div>
          </div>
          <div className="flex flex-col gap-[16px] mt-[14px]">
            <Thumb n={1} active bar="bg-[#222]" barH="h-[3px]" titleTop="mt-[20px]" />
            <Thumb n={2} bar="bg-[#5b9bd5]" barH="h-[3px]" titleTop="mt-[21px]" />
            <Thumb n={3} bar="bg-[#ed7d31]" barH="h-[4px]" titleTop="mt-[21px]" />
          </div>
          <div className="mt-auto mx-[2px] border-t border-[#a0a3ab] h-[31px] flex justify-center items-start pt-[4px]">
            <div className="w-[60px] h-[22px] border border-[#c47a4a] bg-[#cfd0d6] flex items-center justify-center">
              <Ico w={14} h={14}>
                <path d="M7 0V14M0 7H14" stroke="#c9703a" strokeWidth="2" />
              </Ico>
            </div>
          </div>
        </div>

        {/* editor and notes */}
        <div className="w-[672px] shrink-0 flex flex-col">
          <div className="flex h-[438px] shrink-0">
            <div className="flex-1 pl-[16px] pt-[44px]">
              <SlideCanvas />
            </div>
            <VScroll />
          </div>
          <div className="flex-1 border-t border-[#a0a3ab] pl-[10px] pb-[3px] flex items-center text-[13px] text-[#a5a7ae]">单击此处添加备注</div>
        </div>

        <Sidebar />

        {/* side handle */}
        <div className="w-[7px] shrink-0">
          <div className="mt-[205px] h-[101px] bg-[#e8712a] flex items-center justify-center">
            <Ico w={3} h={5}>
              <polygon points="0,0 3,2.500 0,5" fill="#fff" />
            </Ico>
          </div>
        </div>
      </div>

      <StatusBar />
    </div>
  );
}
